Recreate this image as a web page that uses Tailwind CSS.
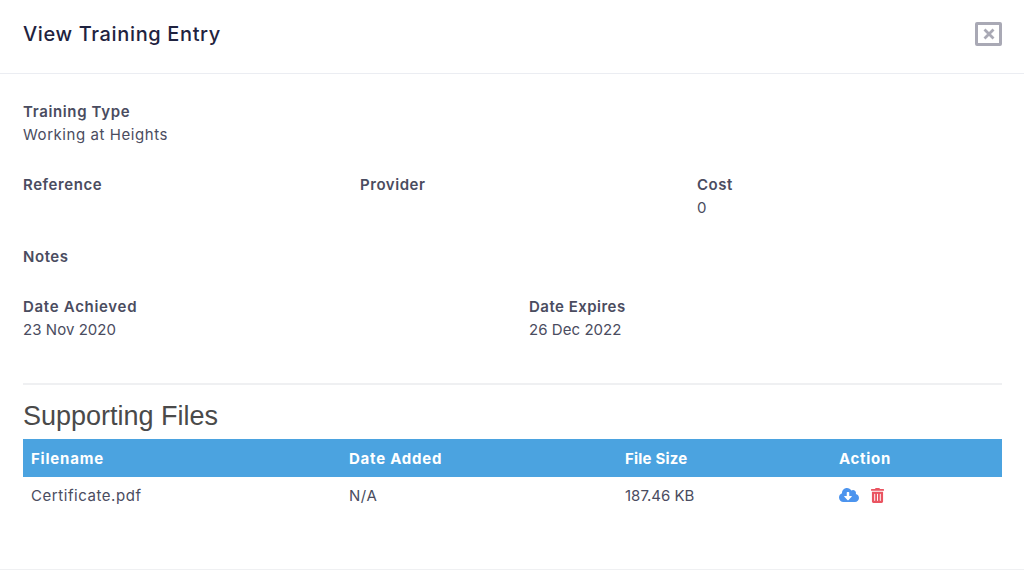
<!DOCTYPE html>
<html lang="en">
<head>
    <meta charset="UTF-8">
    <title>View Training Entry</title>
    <script src="https://cdn.jsdelivr.net/npm/@tailwindcss/browser@4"></script>
</head>
<body class="bg-white w-[1024px] h-[570px] overflow-hidden font-['Inter',sans-serif] text-[15px] leading-[23px] tracking-[0.56px] text-[#4a4c60]">
    <div class="h-[570px] border-b border-[#eff0f2]">
        <!-- header -->
        <div class="h-[74px] border-b border-[#ebedf2] pl-[23px] pr-[22px] pb-[4px] flex items-center justify-between">
            <h1 class="text-[20px] font-medium tracking-[0.64px] text-[#1f2340]">View Training Entry</h1>
            <div class="mb-[1px] w-[27px] h-[24px] border-[3px] border-[#a9a9b5] rounded-[2px] flex items-center justify-center">
                <svg width="12" height="12" viewBox="0 0 12 12"><path d="M1.5 1.5l9 9M10.5 1.5l-9 9" stroke="#a9a9b5" stroke-width="2.8" fill="none"/></svg>
            </div>
        </div>
        <div class="pt-[26px] pl-[23px] pr-[22px]">
            <!-- details -->
            <div class="h-[73px]">
                <div class="font-semibold tracking-[0.64px]">Training Type</div>
                <div>Working at Heights</div>
            </div>
            <div class="grid grid-cols-[337px_337px_1fr] h-[72px]">
                <div class="font-semibold">Reference</div>
                <div class="font-semibold">Provider</div>
                <div>
                    <div class="font-semibold">Cost</div>
                    <div>0</div>
                </div>
            </div>
            <div class="h-[50px] font-semibold">Notes</div>
            <div class="grid grid-cols-[506px_1fr] h-[88px]">
                <div>
                    <div class="font-semibold tracking-[0.7px]">Date Achieved</div>
                    <div class="tracking-[0.05px]">23 Nov 2020</div>
                </div>
                <div>
                    <div class="font-semibold tracking-[0.48px]">Date Expires</div>
                    <div class="tracking-[0.05px]">26 Dec 2022</div>
                </div>
            </div>
            <div class="border-t-2 border-[#eff0f2] pt-[15px]">
                <h2 class="font-['Liberation_Sans',sans-serif] text-[27px] leading-[32px] tracking-normal text-[#4a4a4a]">Supporting Files</h2>
            </div>
            <!-- files table -->
            <div class="mt-[7px] h-[38px] bg-[#4ba3e0] text-white font-bold grid grid-cols-[318px_276px_214px_1fr] items-center pl-[8px]">
                <div class="tracking-[0.8px]">Filename</div>
                <div class="tracking-[0.76px]">Date Added</div>
                <div class="tracking-[0.2px]">File Size</div>
                <div class="tracking-[0.7px]">Action</div>
            </div>
            <div class="h-[36px] grid grid-cols-[318px_276px_214px_1fr] items-center pl-[8px]">
                <div>Certificate.pdf</div>
                <div>N/A</div>
                <div class="tracking-normal">187.46 KB</div>
                <div class="flex items-center gap-[12px]">
                    <svg width="20" height="16" viewBox="0 0 640 512"><path fill="#4c94ee" d="M537.6 226.6c4.1-10.7 6.4-22.4 6.4-34.6 0-53-43-96-96-96-19.7 0-38.1 6-53.3 16.2C367 64.2 315.3 32 256 32c-88.4 0-160 71.6-160 160 0 2.7.1 5.4.2 8.1C40.2 219.8 0 273.2 0 336c0 79.5 64.5 144 144 144h368c70.7 0 128-57.3 128-128 0-61.9-44-113.6-102.4-125.4zm-132.9 88.7L299.3 420.7c-6.2 6.2-16.4 6.2-22.6 0L171.3 315.3c-10.1-10.1-2.9-27.3 11.3-27.3H248V176c0-8.8 7.2-16 16-16h48c8.8 0 16 7.2 16 16v112h65.4c14.2 0 21.4 17.2 11.3 27.3z"/></svg>
                    <svg width="13" height="15" viewBox="0 0 448 512"><path fill="#ea5461" d="M32 464a48 48 0 0 0 48 48h288a48 48 0 0 0 48-48V128H32zm272-256a16 16 0 0 1 32 0v224a16 16 0 0 1-32 0zm-96 0a16 16 0 0 1 32 0v224a16 16 0 0 1-32 0zm-96 0a16 16 0 0 1 32 0v224a16 16 0 0 1-32 0zM432 32H312l-9.4-18.7A24 24 0 0 0 281.1 0H166.8a23.72 23.72 0 0 0-21.3 13.3L136 32H16A16 16 0 0 0 0 48v32a16 16 0 0 0 16 16h416a16 16 0 0 0 16-16V48a16 16 0 0 0-16-16z"/></svg>
                </div>
            </div>
        </div>
    </div>
</body>
</html>
